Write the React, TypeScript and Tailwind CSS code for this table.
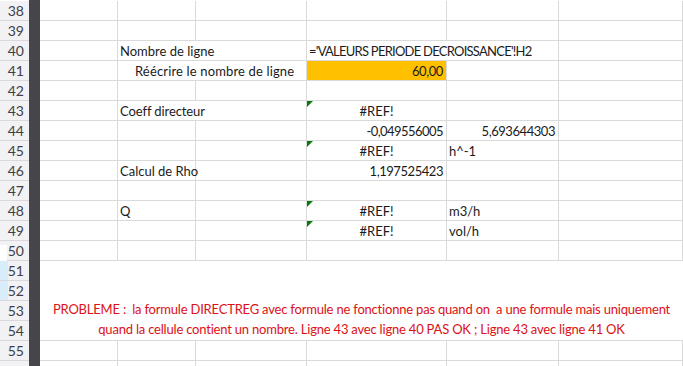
type Align = 'left' | 'right' | 'center'

type Cell = {
  text?: string
  align?: Align
  spill?: boolean // text runs into the next cell, so no right border
  fill?: string
  flag?: boolean // green error triangle
  indent?: boolean
  tight?: string
}

const E: Cell = {}

const rows: { n: number; cells: Cell[] }[] = [
  { n: 38, cells: [E, E, E, E, E, E] },
  { n: 39, cells: [E, E, E, E, E, E] },
  {
    n: 40,
    cells: [
      E,
      { text: 'Nombre de ligne', spill: true },
      E,
      { text: "='VALEURS PERIODE DECROISSANCE'!H2", spill: true, tight: 'tracking-[-0.75px]' },
      E,
      E,
    ],
  },
  {
    n: 41,
    cells: [
      E,
      { text: 'Réécrire le nombre de ligne', spill: true, indent: true, tight: 'tracking-[0.15px]' },
      E,
      { text: '60,00', align: 'right', fill: 'orange', tight: 'tracking-[-0.4px]' },
      E,
      E,
    ],
  },
  { n: 42, cells: [E, E, E, E, E, E] },
  {
    n: 43,
    cells: [E, { text: 'Coeff directeur', spill: true, tight: 'tracking-[-0.1px]' }, E, { text: '#REF!', align: 'center', flag: true }, E, E],
  },
  {
    n: 44,
    cells: [
      E,
      E,
      E,
      { text: '-0,049556005', align: 'right', tight: 'tracking-[-0.55px]' },
      { text: '5,693644303', align: 'right', tight: 'tracking-[-0.45px]' },
      E,
    ],
  },
  {
    n: 45,
    cells: [E, E, E, { text: '#REF!', align: 'center', flag: true }, { text: 'h^-1' }, E],
  },
  {
    n: 46,
    cells: [E, { text: 'Calcul de Rho' }, E, { text: '1,197525423', align: 'right', tight: 'tracking-[-0.45px]' }, E, E],
  },
  { n: 47, cells: [E, E, E, E, E, E] },
  {
    n: 48,
    cells: [E, { text: 'Q' }, E, { text: '#REF!', align: 'center', flag: true }, { text: 'm3/h' }, E],
  },
  {
    n: 49,
    cells: [E, E, E, { text: '#REF!', align: 'center', flag: true }, { text: 'vol/h' }, E],
  },
  { n: 50, cells: [E, E, E, E, E, E] },
]

const after = [55, 56]

function GridCell({ c }: { c: Cell }) {
  const justify =
    c.align === 'right' ? 'justify-end pr-[3px]' : c.align === 'center' ? 'justify-center' : 'justify-start pl-[2px]'
  return (
    <div
      className={[
        'relative flex items-center whitespace-nowrap border-b border-[#dadada] leading-[20px]',
        c.spill ? '' : 'border-r',
        c.fill === 'orange' ? 'bg-[#ffc000]' : '',
        c.indent ? 'pl-[17px]' : justify,
      ].join(' ')}
    >
      {c.flag && (
        <span className="absolute left-0 top-0 h-0 w-0 border-t-[6px] border-r-[6px] border-t-[#0b7a0b] border-r-transparent" />
      )}
      {c.text && <span className={'relative ' + (c.tight ?? '')}>{c.text}</span>}
    </div>
  )
}

export default function App() {
  const headers = [...rows.map(r => r.n), 51, 52, 53, 54, ...after]

  return (
    <div
      className="flex h-[366px] w-[683px] overflow-hidden bg-white pt-[1px] text-[13px] text-[#1b1b1b]"
      style={{ fontFamily: 'Lato, "Open Sans", sans-serif' }}
    >
      {/* row headers */}
      <div className="flex w-[29px] shrink-0 flex-col bg-[#f2f1f4]">
        {headers.map(n => (
          <div
            key={n}
            className="relative flex h-[20px] shrink-0 items-center justify-end border-b border-[#d9d8dc] pr-[5px] text-[14px] leading-[20px] text-[#3f3f4a]"
          >
            {(n === 51 || n === 52) && <span className="absolute left-0 top-0 h-full w-[8px] bg-[#d8ecfa]" />}
            {n === 50 && <span className="absolute left-0 top-[4px] h-[16px] w-[7px] bg-white" />}
            {/* row 56 sits below the fold, only its top edge shows */}
            {n < 56 && <span className="relative">{n}</span>}
          </div>
        ))}
      </div>

      {/* frozen pane divider */}
      <div className="mt-[-1px] w-[11px] shrink-0 bg-[#46454b]" />

      {/* cells */}
      <div className="grid flex-1 auto-rows-[20px] grid-cols-[78px_78px_111px_140px_112px_1fr] content-start">
        {rows.map(r => r.cells.map((c, i) => <GridCell key={`${r.n}-${i}`} c={c} />))}

        <div className="col-span-6 row-span-4 flex flex-col items-center justify-end border-b border-[#dadada] pb-[1px] text-center leading-[20px] tracking-[-0.2px] text-[#dc1015]">
          <span className="whitespace-pre">PROBLEME :  la formule DIRECTREG avec formule ne fonctionne pas quand on  a une formule mais uniquement</span>
          <span className="whitespace-pre">quand la cellule contient un nombre. Ligne 43 avec ligne 40 PAS OK ; Ligne 43 avec ligne 41 OK</span>
        </div>

        {after.map(n => [E, E, E, E, E, E].map((c, i) => <GridCell key={`${n}-${i}`} c={c} />))}
      </div>
    </div>
  )
}
